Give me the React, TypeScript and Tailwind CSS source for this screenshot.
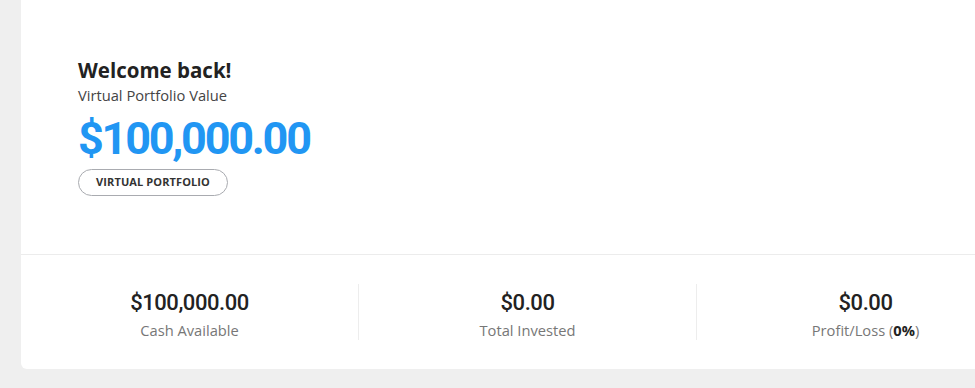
import * as React from 'react';

function Stat({ value, label, first }: { value: string; label: React.ReactNode; first?: boolean }) {
  return (
    <div className={`flex-1 flex flex-col items-center pt-[5px] ${first ? '' : 'border-l border-[#ededed]'}`}>
      <div className="font-['Roboto',sans-serif] font-medium text-[22px] leading-[28px] tracking-[-0.02em] text-[#222]">
        {value}
      </div>
      <div className="mt-[3px] font-['Open_Sans',sans-serif] text-[14.7px] leading-[20px] text-[#777]">{label}</div>
    </div>
  );
}

export default function App() {
  return (
    <div className="w-screen h-screen overflow-hidden bg-[#efefef] pl-[21px]">
      <div className="w-[1013px] bg-white rounded-b-md">
        {/* Header */}
        <div className="px-[57px] pt-[57px] pb-[58px] border-b border-[#ececec]">
          <h1 className="font-['Open_Sans',sans-serif] font-bold text-[20.5px] leading-[26px] text-[#222]">
            Welcome back!
          </h1>
          <p className="mt-[3px] font-['Open_Sans',sans-serif] text-[14.7px] leading-[18px] text-[#444]">
            Virtual Portfolio Value
          </p>
          <div className="mt-[12px] font-['Roboto',sans-serif] font-bold text-[45px] leading-[46px] tracking-[-0.05em] text-[#2196f3]">
            $100,000.00
          </div>
          <div className="mt-[7px] inline-flex items-center justify-center w-[150px] h-[27px] rounded-full border border-[#a9abb0] font-['Open_Sans',sans-serif] font-bold text-[11px] text-[#333] tracking-[0.01em]">
            VIRTUAL PORTFOLIO
          </div>
        </div>
        {/* Stats */}
        <div className="flex py-[29px]">
          <Stat first value="$100,000.00" label="Cash Available" />
          <Stat value="$0.00" label="Total Invested" />
          <Stat
            value="$0.00"
            label={
              <>
                Profit/Loss (<span className="font-bold text-[#222]">0%</span>)
              </>
            }
          />
        </div>
      </div>
    </div>
  );
}
